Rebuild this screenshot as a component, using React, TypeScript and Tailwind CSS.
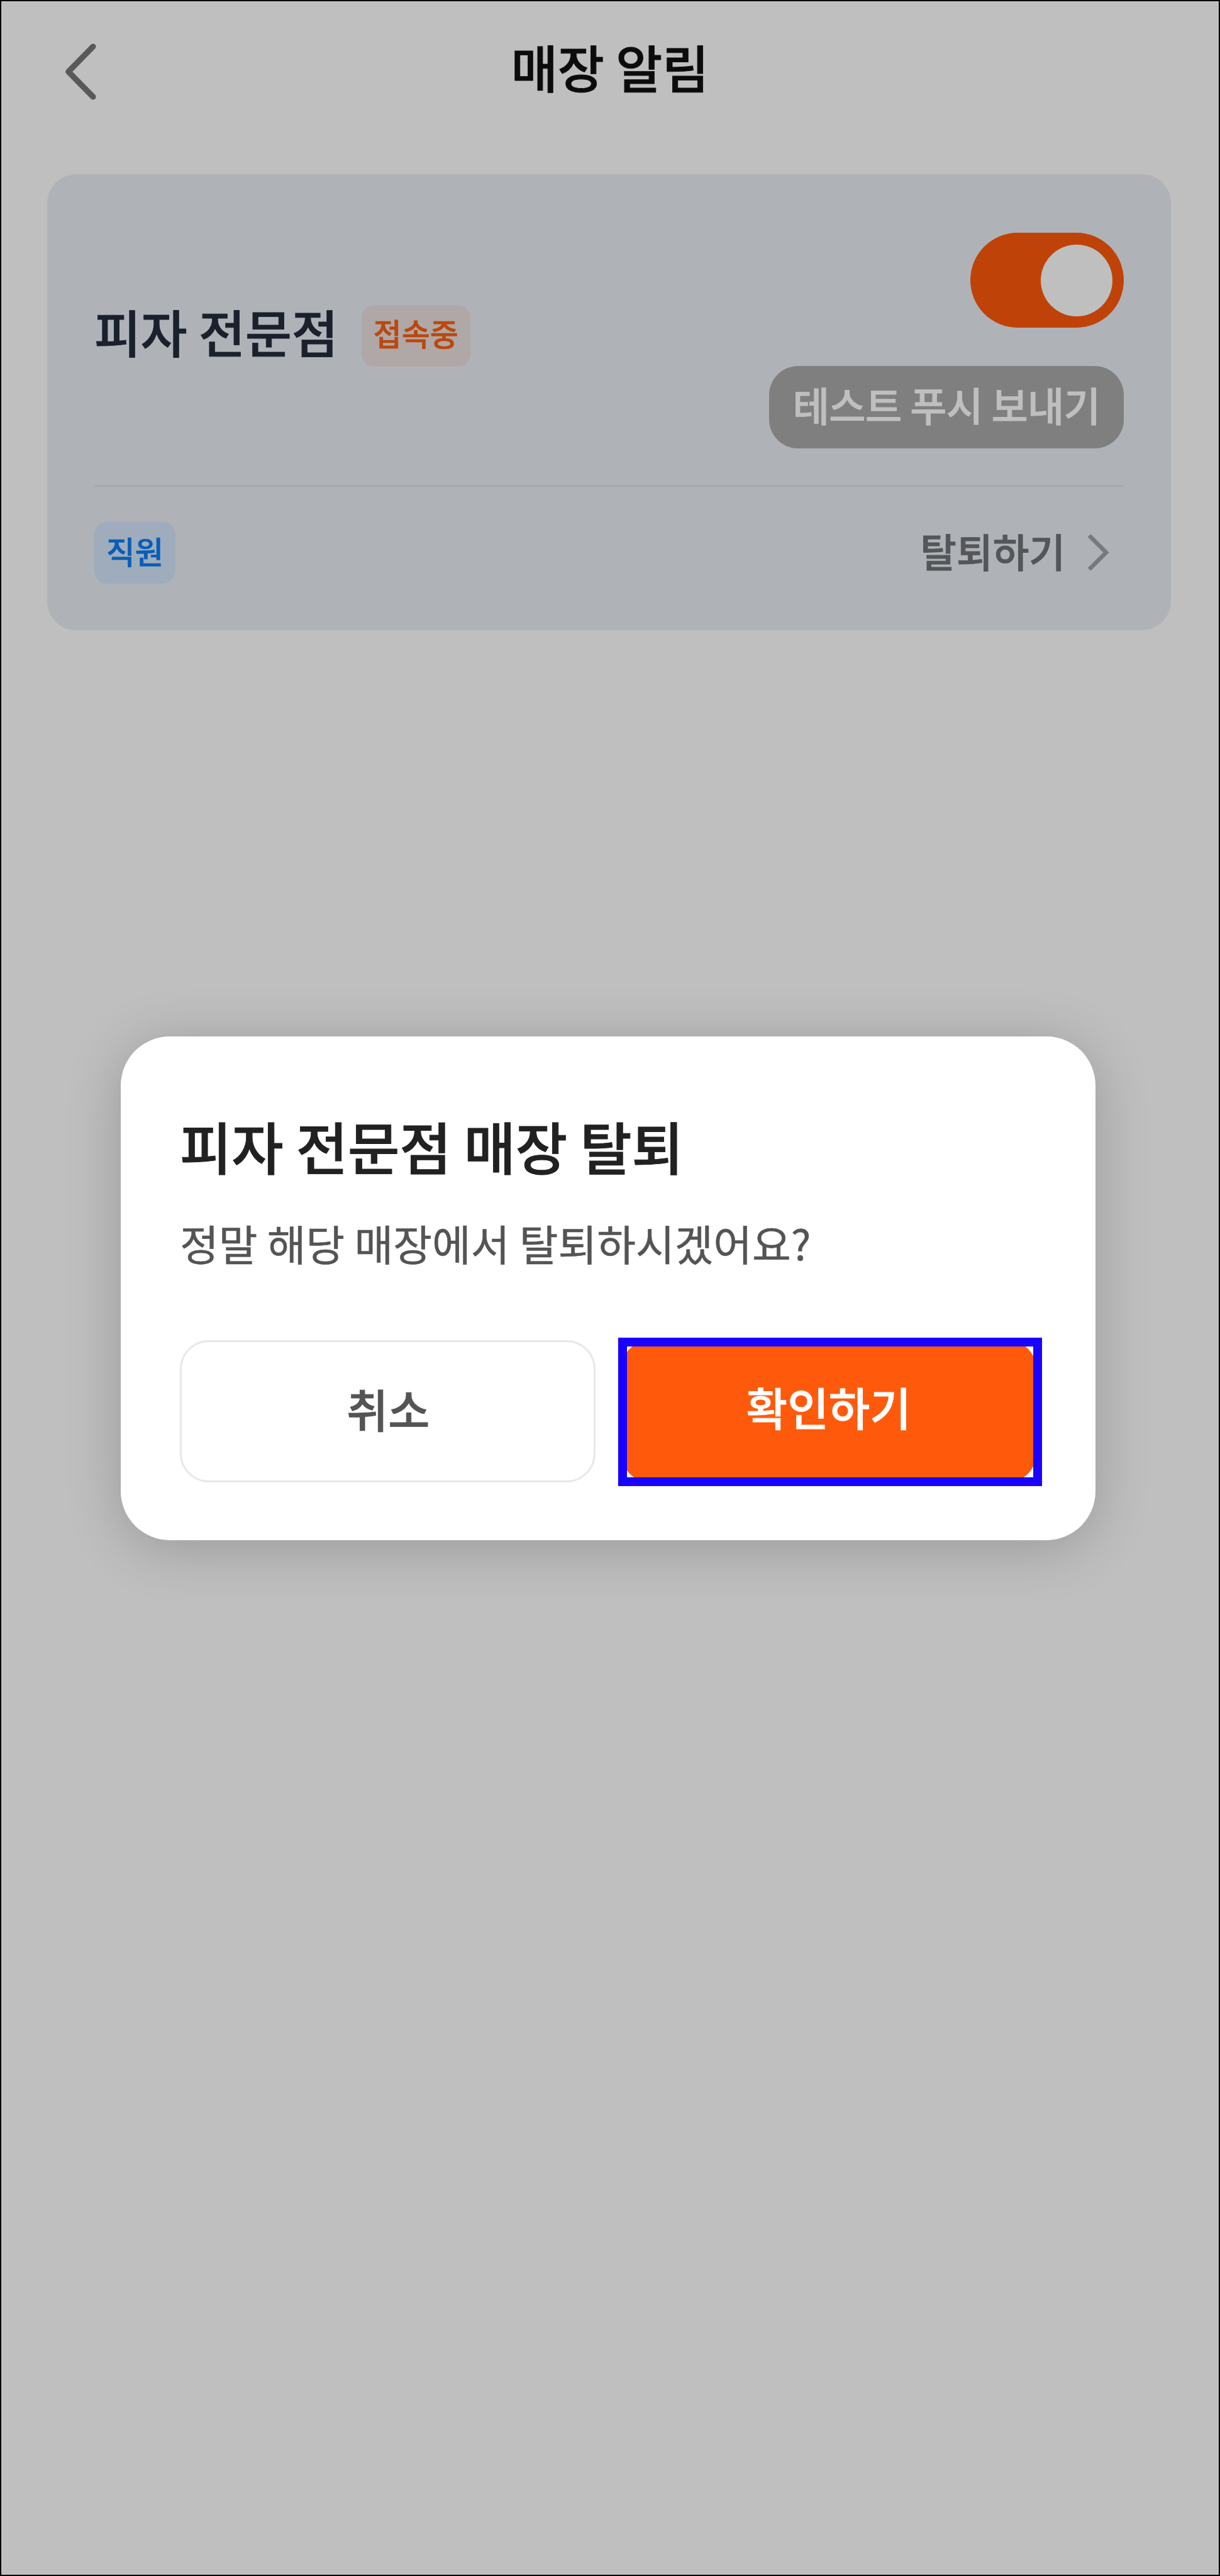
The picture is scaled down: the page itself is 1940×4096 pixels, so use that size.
function BackIcon() {
  return (
    <svg className="h-[90px] w-[49px]" viewBox="0 0 49 90" fill="none" stroke="#595959" strokeWidth="9.2" strokeLinecap="round" strokeLinejoin="round">
      <path d="M44 5 4.8 45 44 85" />
    </svg>
  );
}

function ForwardIcon() {
  return (
    <svg className="h-[59px] w-9" viewBox="0 0 36 59" fill="none" stroke="#77797d" strokeWidth="6.6">
      <path d="M3 2.6 30 29.5 3 56.4" />
    </svg>
  );
}

function Header() {
  return (
    <header className="flex h-[206px] items-center px-[102px]">
      <button className="mt-[18px] w-[49px]" aria-label="뒤로">
        <BackIcon />
      </button>
      <h1 className="flex-1 text-center text-[80.5px] font-medium text-[#0c0c0c]">매장 알림</h1>
      <div className="w-[49px]" />
    </header>
  );
}

function Toggle() {
  return (
    <button className="flex h-[151px] w-[244px] items-center justify-end rounded-full bg-[#bf4308] pr-[18px]" role="switch" aria-checked="true">
      <span className="size-[114px] rounded-full bg-[#bfbfbf]" />
    </button>
  );
}

function StoreCard() {
  return (
    <section className="mt-[69px] ml-[73px] flex h-[725px] w-[1787px] flex-col rounded-[46px] bg-[#afb3b8] px-[75px]">
      <div className="flex items-start justify-between pt-[93px]">
        <div className="mt-[115px] flex h-[98px] items-center gap-[37px]">
          <h2 className="pb-[16px] text-[80.3px] leading-none font-medium whitespace-nowrap text-[#1a202c]">피자 전문점</h2>
          <span className="flex h-[98px] w-[173px] items-center justify-center rounded-[20px] bg-[#b0a8a6] pb-[11px] text-[49px] leading-none font-medium text-[#bb480f] [-webkit-text-stroke:0.6px]">접속중</span>
        </div>
        <div className="flex flex-col items-end">
          <Toggle />
          <div className="mt-5 h-[3px] w-[244px] bg-[#b3b2b6]" />
          <button className="mt-[38px] flex h-[131px] w-[564px] items-center justify-center rounded-[46px] bg-[#7f7f7f] pb-[9px] text-[63.3px] leading-none font-medium tracking-[-0.6px] whitespace-nowrap text-[#bfbfbf]">
            테스트 푸시 보내기
          </button>
        </div>
      </div>
      <hr className="mt-[58px] h-[3px] border-0 bg-[#a6aaae]" />
      <div className="mt-[56px] flex h-[98px] items-center justify-between">
        <span className="flex h-[98px] w-[129px] items-center justify-center rounded-[20px] bg-[#9eacbc] pb-[7px] text-[49.5px] leading-none font-medium text-[#085eb7] [-webkit-text-stroke:0.6px]">직원</span>
        <button className="flex items-center gap-[35px] pr-[22px]">
          <span className="pb-[8px] text-[62.7px] leading-none font-medium text-[#545659]">탈퇴하기</span>
          <ForwardIcon />
        </button>
      </div>
    </section>
  );
}

function LeaveDialog() {
  return (
    <div className="absolute inset-0 flex items-center justify-center pr-[6px]">
      <div role="dialog" className="flex w-[1550px] flex-col rounded-[78px] bg-white px-[94px] pt-[113px] pb-[92px] shadow-[0_12px_90px_rgba(0,0,0,0.2)]">
        <h2 className="text-[89.6px] leading-[120px] font-medium tracking-[-0.2px] text-[#212121]">피자 전문점 매장 탈퇴</h2>
        <p className="mt-[47px] text-[67.1px] leading-[96px] text-[#545454] [-webkit-text-stroke:0.5px]">정말 해당 매장에서 탈퇴하시겠어요?</p>
        <div className="mt-[107px] flex h-[226px] gap-[41px]">
          <button className="w-[661px] rounded-[46px] border-[3px] border-[#e8e8e8] pb-[7px] pl-[2px] text-[71.8px] leading-none font-medium text-[#545454]">취소</button>
          <button className="relative w-[661px] rounded-[46px] bg-[#ff5a0b] pb-[14px] text-[71.3px] leading-none font-medium text-white">
            확인하기
            <span className="absolute -top-[4px] -right-[9px] -bottom-[6px] -left-[5px] border-[14px] border-[#1a00ff]" />
          </button>
        </div>
      </div>
    </div>
  );
}

export default function App() {
  return (
    <main lang="ko" className="relative h-[4096px] w-[1940px] overflow-hidden border-2 border-black bg-[#bfbfbf] font-['Noto_Sans_CJK_KR',sans-serif] [-webkit-text-stroke:0.9px] [&_*]:[word-spacing:-0.052em]">
      <Header />
      <StoreCard />
      <LeaveDialog />
    </main>
  );
}
